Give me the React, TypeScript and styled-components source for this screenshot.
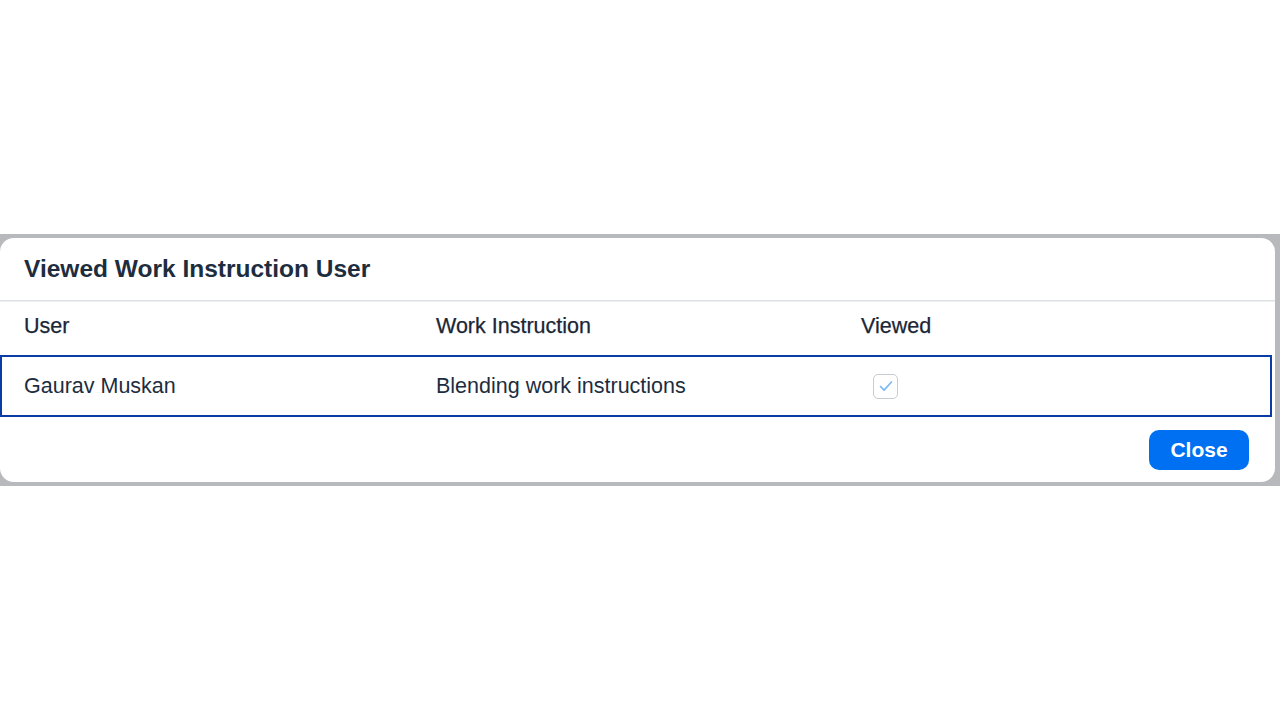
import React from "react";
import styled, { createGlobalStyle } from "styled-components";

const GlobalStyle = createGlobalStyle`
    body {
        margin: 0;
        background: #ffffff;
        font-family: "Liberation Sans", Arial, sans-serif;
        color: #1d2d3e;
    }
`;

const rows = [
    { user: "Gaurav Muskan", instruction: "Blending work instructions", viewed: true },
];

export const App = () => {
    return (
        <>
            <GlobalStyle />
            <Page>
                <Backdrop>
                    <Dialog>
                        <Header>
                            <Title>Viewed Work Instruction User</Title>
                        </Header>
                        <HeadRow>
                            <HeadCell>User</HeadCell>
                            <HeadCell>Work Instruction</HeadCell>
                            <HeadCell>Viewed</HeadCell>
                        </HeadRow>
                        {rows.map((r) => (
                            <DataRow key={r.user} $focused>
                                <Cell>{r.user}</Cell>
                                <Cell>{r.instruction}</Cell>
                                <Cell>
                                    <CheckBox>
                                        {r.viewed && (
                                            <svg width="20" height="20" viewBox="0 0 20 20">
                                                <path
                                                    d="M4.5 10.5l3.6 3.6L15.5 6"
                                                    fill="none"
                                                    stroke="#78b7f5"
                                                    strokeWidth="1.6"
                                                    strokeLinecap="round"
                                                    strokeLinejoin="round"
                                                />
                                            </svg>
                                        )}
                                    </CheckBox>
                                </Cell>
                            </DataRow>
                        ))}
                        <Footer>
                            <Button>Close</Button>
                        </Footer>
                    </Dialog>
                </Backdrop>
            </Page>
        </>
    );
};

export default App;

const Page = styled.div`
    padding-top: 234px;
    height: 720px;
    box-sizing: border-box;
`;

const Backdrop = styled.div`
    background: #b7b9bc;
    padding: 4px 5px 4px 0;
`;

const Dialog = styled.div`
    background: #ffffff;
    border-radius: 14px;
    height: 244px;
    display: flex;
    flex-direction: column;
    overflow: hidden;
`;

const Header = styled.div`
    height: 62px;
    display: flex;
    align-items: center;
    padding: 0 24px;
    border-bottom: 1px solid #dcdfe3;
    box-shadow: 0 1px 0 #eef0f2;
`;

const Title = styled.h1`
    margin: 0;
    font-size: 24.5px;
    font-weight: 700;
    color: #1d2d3e;
`;

const grid = `
    display: grid;
    grid-template-columns: 412px 425px 1fr;
    padding-left: 24px;
    align-items: center;
`;

const HeadRow = styled.div`
    ${grid}
    height: 54px;
    box-sizing: border-box;
    padding-bottom: 4px;
`;

const HeadCell = styled.div`
    font-size: 21.5px;
    color: #1a2636;
    -webkit-text-stroke: 0.25px #1a2636;
`;

const DataRow = styled.div<{ $focused?: boolean }>`
    ${grid}
    height: 62px;
    box-sizing: border-box;
    margin-right: 3px;
    border: 2px solid ${(p) => (p.$focused ? "#0a3ca6" : "transparent")};
    padding-left: 22px;
`;

const Cell = styled.div`
    font-size: 21.5px;
    color: #1d2d3e;
`;

const CheckBox = styled.span`
    margin-left: 12px;
    width: 25px;
    height: 25px;
    box-sizing: border-box;
    border: 1px solid #c6ccd3;
    border-radius: 5px;
    display: inline-flex;
    align-items: center;
    justify-content: center;
    vertical-align: middle;
`;

const Footer = styled.div`
    flex: 1;
    display: flex;
    align-items: center;
    justify-content: flex-end;
    padding-right: 26px;
`;

const Button = styled.button`
    width: 100px;
    height: 40px;
    border: none;
    border-radius: 10px;
    background: #0070f2;
    color: #ffffff;
    font-family: "Liberation Sans", Arial, sans-serif;
    font-size: 21px;
    font-weight: 700;
    cursor: pointer;
`;
